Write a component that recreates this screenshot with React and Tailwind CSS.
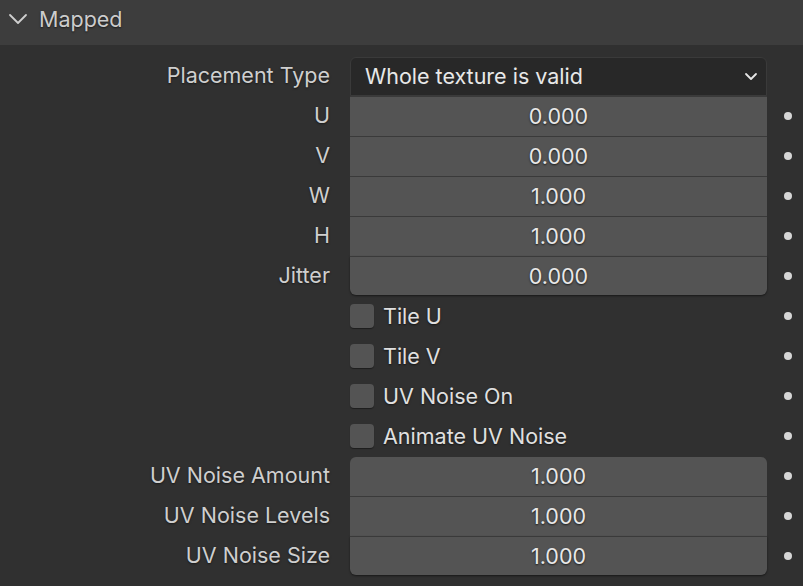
import React from 'react';

const font = { fontFamily: 'Inter, "Noto Sans", sans-serif' };

const Dot = () => (
  <div className="flex-1 flex items-center">
    <div className="ml-[17px] w-[8px] h-[8px] rounded-full bg-[#d6d6d6]" />
  </div>
);

const Label = ({ children }) => (
  <div className="w-[330px] shrink-0 text-right text-[21.5px] text-[#cfcfcf] leading-none [text-shadow:0_1px_2px_rgba(0,0,0,0.5)]">
    {children}
  </div>
);

const NumberRow = ({ label, value, first, last }) => (
  <div className="flex items-center h-10">
    <Label>{label}</Label>
    <div
      className={`ml-5 w-[417px] shrink-0 self-stretch flex items-center justify-center bg-[#545454] text-[21.5px] text-[#e8e8e8] [text-shadow:0_1px_2px_rgba(0,0,0,0.7)] ${
        first ? 'rounded-t-md mt-px' : 'border-t border-[#3a3a3a]'
      } ${last ? 'rounded-b-md mb-px shadow-[0_1px_2px_rgba(0,0,0,0.5)]' : ''}`}
    >
      {value}
    </div>
    <Dot />
  </div>
);

const CheckRow = ({ label }) => (
  <div className="flex items-center h-10">
    <div className="w-[330px] shrink-0" />
    <div className="ml-5 w-[417px] shrink-0 flex items-center">
      <div className="w-6 h-6 rounded-[4px] bg-[#545454] shadow-[0_1px_1px_rgba(0,0,0,0.4)]" />
      <span className="ml-[9px] text-[21.5px] text-[#e0e0e0] [text-shadow:0_1px_2px_rgba(0,0,0,0.6)]">
        {label}
      </span>
    </div>
    <Dot />
  </div>
);

export default function App() {
  return (
    <div className="w-[803px] h-[586px] bg-[#303030] overflow-hidden" style={font}>
      {/* Panel header */}
      <div className="h-[45px] bg-[#3d3d3d] flex items-center pb-[7px]">
        <svg width="20" height="12" viewBox="0 0 20 12" className="ml-[8px] mr-[11px]">
          <path d="M2 2 L10 10 L18 2" fill="none" stroke="#cfcfcf" strokeWidth="1.8" strokeLinecap="round" strokeLinejoin="round" />
        </svg>
        <span className="text-[21.5px] text-[#cccccc] [text-shadow:0_1px_2px_rgba(0,0,0,0.6)]">Mapped</span>
      </div>

      <div className="pt-[11px]">
        <div className="flex items-center h-10">
          <Label>Placement Type</Label>
          <div className="ml-5 w-[417px] shrink-0 h-[39px] mt-px self-start flex items-center justify-between bg-[#282828] border border-[#3a3a3a] rounded-t-md pl-[14px] pr-[8px]">
            <span className="text-[21.5px] text-[#e8e8e8]">Whole texture is valid</span>
            <svg width="14" height="9" viewBox="0 0 14 9">
              <path d="M2 2 L7 7 L12 2" fill="none" stroke="#e6e6e6" strokeWidth="1.8" strokeLinecap="round" strokeLinejoin="round" />
            </svg>
          </div>
          <div className="flex-1" />
        </div>
        <NumberRow label="U" value="0.000" />
        <NumberRow label="V" value="0.000" />
        <NumberRow label="W" value="1.000" />
        <NumberRow label="H" value="1.000" />
        <NumberRow label="Jitter" value="0.000" last />
        <CheckRow label="Tile U" />
        <CheckRow label="Tile V" />
        <CheckRow label="UV Noise On" />
        <CheckRow label="Animate UV Noise" />
        <NumberRow label="UV Noise Amount" value="1.000" first />
        <NumberRow label="UV Noise Levels" value="1.000" />
        <NumberRow label="UV Noise Size" value="1.000" last />
      </div>
    </div>
  );
}
